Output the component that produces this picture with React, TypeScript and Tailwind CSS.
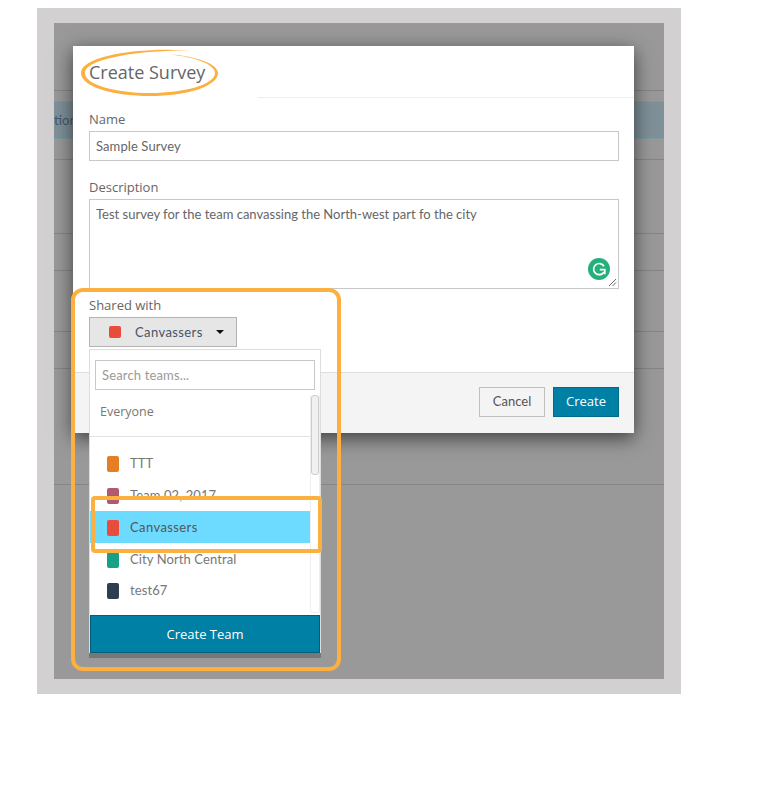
import React from 'react';

const teams = [
  { name: 'TTT', color: 'bg-[#e67e22]', active: false, height: 'h-[32px]' },
  { name: 'Team 02, 2017', color: 'bg-[#b05a70]', active: false, height: 'h-[32px]' },
  { name: 'Canvassers', color: 'bg-[#e74c3c]', active: true, height: 'h-[32px]' },
  { name: 'City North Central', color: 'bg-[#16a085]', active: false, height: 'h-[32px]' },
  { name: 'test67', color: 'bg-[#2c3e50]', active: false, height: 'h-[31px]' },
];

const labelClass = "block text-[13px] leading-[18px] font-medium text-[#666] font-['Open_Sans',sans-serif]";
const inputClass = "border border-[#c8c8c8] px-[6px] text-[13px] text-[#666] font-['Lato',sans-serif]";

export default function App() {
  return (
    <div className="w-[766px] h-[799px] bg-white relative overflow-hidden font-['Open_Sans',sans-serif] pt-[8px] pl-[37px]">
      {/* Page behind the modal */}
      <div className="w-[644px] h-[686px] bg-[#d2d0d0] pt-[15px] pl-[17px]">
        <div className="w-[610px] h-[656px] bg-[#999999] overflow-hidden">
          <div className="h-[68px] border-b border-[#858585]" />
          <div className="h-[10px]" />
          <div className="h-[38px] bg-[#7f9098] border-y border-[#7a9ca3] text-[13px] leading-[36px] text-[#3f5a6e] font-['Lato',sans-serif] whitespace-nowrap">
            tion
          </div>
          <div className="h-[21px] border-b border-[#858585]" />
          <div className="h-[74px] border-b border-[#858585]" />
          <div className="h-[37px] border-b border-[#858585]" />
          <div className="h-[61px] border-b border-[#858585]" />
          <div className="h-[37px] border-b border-[#858585]" />
          <div className="h-[116px] border-b border-[#858585]" />
        </div>
      </div>

      {/* Modal */}
      <div className="absolute left-[73px] top-[46px] w-[561px] h-[387px] bg-white shadow-[0_5px_18px_rgba(0,0,0,0.6)] flex flex-col">
        <div className="h-[52px] pl-[16px] pt-[11px] relative">
          <h2 className="text-[18px] leading-[30px] text-[#666]">Create Survey</h2>
          <div className="absolute left-[185px] right-0 bottom-0 h-px bg-[#eeeeee]" />
        </div>
        <div className="flex-1 pl-[16px] pr-[15px] pt-[12px]">
          <label className={`${labelClass} mb-[3px]`}>Name</label>
          <div className={`${inputClass} h-[30px] leading-[28px] tracking-[0.1px]`}>Sample Survey</div>
          <label className={`${labelClass} mt-[17px] mb-[3px]`}>Description</label>
          <div className={`${inputClass} h-[90px] pt-[5px] leading-[18px] relative`}>
            Test survey for the team canvassing the North-west part fo the city
            <span className="absolute right-[8px] bottom-[8px] w-[22px] h-[22px] rounded-full bg-[#25b07a] flex items-center justify-center">
              <svg width="14" height="14" viewBox="0 0 14 14" fill="none" stroke="white" strokeWidth="1.7">
                <path d="M12 4.2A5.6 5.6 0 1 0 12 10" />
                <path d="M7.8 7.6h5v4.6" />
              </svg>
            </span>
            <svg className="absolute right-[1px] bottom-[1px]" width="9" height="9" viewBox="0 0 9 9" stroke="#666" strokeWidth="1">
              <path d="M1 8L8 1M4.5 8L8 4.5" />
            </svg>
          </div>
          <label className={`${labelClass} mt-[7px] mb-[3px]`}>Shared with</label>
          <div className="w-[148px] h-[30px] bg-[#e6e6e6] border border-[#b4b4b4] flex items-center pl-[19px]">
            <span className="w-[12px] h-[12px] rounded-[2px] bg-[#e74c3c]" />
            <span className="ml-[14px] pt-[1px] text-[13px] tracking-[0.4px] text-[#445566] font-['Lato',sans-serif]">Canvassers</span>
            <span className="ml-[13px] w-0 h-0 border-x-[4px] border-x-transparent border-t-[4px] border-t-[#111111]" />
          </div>
        </div>
        <div className="h-[61px] bg-[#f4f4f4] border-t border-[#dddddd] flex items-start justify-end gap-[8px] pr-[15px] pt-[14px]">
          <button className="w-[66px] h-[30px] border border-[#c0c0c0] text-[13px] text-[#555] font-['Lato',sans-serif]">Cancel</button>
          <button className="w-[66px] h-[30px] bg-[#0080a5] border border-[#006a8a] text-[13px] text-white">Create</button>
        </div>
      </div>

      {/* Team dropdown */}
      <div className="absolute left-[89px] top-[349px] w-[232px] h-[304px] bg-white border-x border-t border-[#dddddd] flex flex-col shadow-[0_5px_0_rgba(0,0,0,0.22)]">
        <div className="h-[45px] px-[5px] pt-[10px] shrink-0">
          <div className="h-[30px] border border-[#c8c8c8] px-[6px] text-[13px] leading-[28px] tracking-[0.15px] text-[#999] font-['Lato',sans-serif]">Search teams...</div>
        </div>
        <div className="flex-1 relative overflow-hidden">
          <div className="w-[220px]">
            <div className="h-[42px] pl-[10px] pt-[8px] text-[12.5px] leading-[18px] text-[#777] border-b border-[#e2e2e2]">Everyone</div>
            <div className="h-[10px]" />
            {teams.map((t) => (
              <div
                key={t.name}
                className={`${t.height} flex items-center gap-[11px] pl-[17px] pt-[1px] text-[13px] font-['Lato',sans-serif] ${t.active ? 'bg-[#6ddbff] text-[#555] tracking-[0.4px]' : 'text-[#777] tracking-[0.1px]'}`}
              >
                <span className={`w-[12px] h-[16px] rounded-[2px] shrink-0 ${t.color}`} />
                {t.name}
              </div>
            ))}
          </div>
          <div className="absolute right-0 top-0 bottom-[2px] w-[10px] border border-t-0 border-[#eeeeee] rounded-b-[3px]">
            <div className="h-[80px] bg-[#f0f0f0] border border-[#cccccc] rounded-[3px]" />
          </div>
        </div>
        <div className="h-[38px] shrink-0 bg-[#0080a5] border border-[#00607c] text-center text-[13px] leading-[36px] text-white">Create Team</div>
      </div>

      {/* Orange annotations */}
      <div className="absolute left-[71px] top-[288px] w-[270px] h-[383px] border-4 border-[#fbb040] rounded-[12px]" />
      <div className="absolute left-[91px] top-[496px] w-[231px] h-[57px] border-4 border-[#fbb040] rounded-[4px]" />
      <svg className="absolute left-[78px] top-[46px]" width="144" height="52" viewBox="0 0 144 52">
        <path
          d="M112 4.5C60 1 3 10 3 27C3 41 36 50 72 50C110 50 140 40 140 27C140 18 118 10 92 8.5C116 11 137 18 137 27C137 38 108 47 72 47C38 47 7 39 7 27C7 13 60 4 112 4.5Z"
          fill="#fbb040"
        />
      </svg>
    </div>
  );
}
